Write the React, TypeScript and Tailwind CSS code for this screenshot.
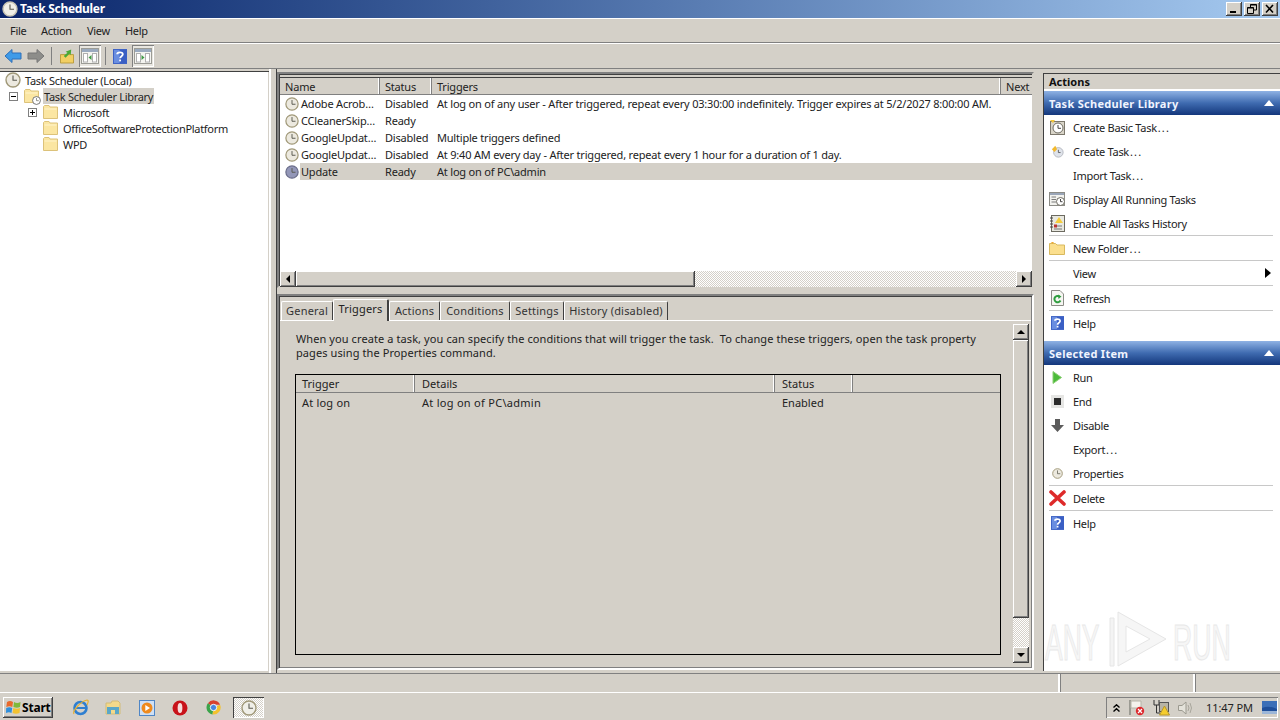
import React from 'react';

const raised = 'shadow-[inset_-1px_-1px_0_#404040,inset_1px_1px_0_#fff,inset_-2px_-2px_0_#808080]';
const headerCell = 'h-full flex items-center border-r border-r-[#808080] shadow-[inset_-1px_0_0_#fff]';
const checker = 'bg-[repeating-conic-gradient(#fff_0_25%,#d4d0c8_0_50%)] bg-[length:2px_2px]';

const Clock = ({ size = 14, fill = '#ece9df', stroke = '#a09878' }: { size?: number; fill?: string; stroke?: string }) => (
  <svg width={size} height={size} viewBox="0 0 16 16">
    <circle cx="8" cy="8" r="7" fill={fill} stroke={stroke} strokeWidth="1.4" />
    <path d="M8 3.5V8.3H12" fill="none" stroke="#5a5a50" strokeWidth="1.1" />
  </svg>
);

const Folder = () => (
  <svg width="15" height="14" viewBox="0 0 15 14">
    <path d="M.5 13.5V1.5L1.5.5H6L7 2H14.5V13.5Z" fill="#fbe6a2" stroke="#dcc27a" />
    <path d="M1.5 4H13.5" stroke="#fff4cc" />
  </svg>
);

const Expander = ({ open }: { open?: boolean }) => (
  <svg width="9" height="9" viewBox="0 0 9 9">
    <rect x=".5" y=".5" width="8" height="8" fill="#fff" stroke="#808080" />
    <path d={open ? 'M2 4.5H7' : 'M2 4.5H7M4.5 2V7'} stroke="#000" />
  </svg>
);

const HelpIcon = ({ size = 15 }: { size?: number }) => (
  <svg width={size} height={size + 1} viewBox="0 0 15 16">
    <rect width="15" height="16" fill="#3a5fc4" />
    <rect x="1" y="1" width="6" height="14" fill="#6a8ee0" />
    <path d="M4.5 5.5C4.5 3 10.5 2.8 10.5 5.6C10.5 7.6 7.6 7.8 7.6 10" fill="none" stroke="#fff" strokeWidth="2" />
    <rect x="6.6" y="11.2" width="2" height="2" fill="#fff" />
  </svg>
);

const BarArrow = ({ dir, color, dark }: { dir: 'l' | 'r'; color: string; dark: string }) => (
  <svg width="18" height="16" viewBox="0 0 18 16">
    <path
      d={dir === 'l' ? 'M1 8L8 1.5V5H17V11H8V14.5Z' : 'M17 8L10 1.5V5H1V11H10V14.5Z'}
      fill={color}
      stroke={dark}
    />
  </svg>
);

const PaneToggle = ({ right }: { right?: boolean }) => (
  <svg width="18" height="16" viewBox="0 0 18 16">
    <rect x=".5" y=".5" width="17" height="15" fill="#f4f4f0" stroke="#9c9c96" />
    <rect x="1" y="1" width="16" height="3" fill="#9aaabf" />
    <rect x="2.5" y="5.5" width="4" height="8.5" fill="#fff" stroke="#b0b0b0" />
    <rect x="11.5" y="5.5" width="4" height="8.5" fill="#fff" stroke="#b0b0b0" />
    <path d={right ? 'M7.5 7V12L10.5 9.5Z' : 'M10.5 7V12L7.5 9.5Z'} fill="#3f9a45" />
  </svg>
);

const treeRow = 'h-4 flex items-center';

function Tree() {
  return (
    <div className="w-[268px] bg-white text-[#222] tracking-[-0.3px]">
      <div className={`${treeRow} pl-[5px] gap-[4px]`}>
        <Clock size={16} />
        <span>Task Scheduler (Local)</span>
      </div>
      <div className={`${treeRow} pl-[9px]`}>
        <Expander open />
        <span className="ml-[6px] relative">
          <Folder />
          <span className="absolute -right-[2px] -bottom-[2px]"><Clock size={9} fill="#fff" stroke="#555" /></span>
        </span>
        <span className="ml-[4px] bg-[#d4d0c8] px-[1px] h-4 flex items-center">Task Scheduler Library</span>
      </div>
      <div className={`${treeRow} pl-[28px]`}>
        <Expander />
        <span className="ml-[6px]"><Folder /></span>
        <span className="ml-[5px]">Microsoft</span>
      </div>
      <div className={`${treeRow} pl-[43px]`}>
        <Folder />
        <span className="ml-[5px]">OfficeSoftwareProtectionPlatform</span>
      </div>
      <div className={`${treeRow} pl-[43px]`}>
        <Folder />
        <span className="ml-[5px]">WPD</span>
      </div>
    </div>
  );
}

const tasks = [
  { name: 'Adobe Acrob…', status: 'Disabled', trigger: 'At log on of any user - After triggered, repeat every 03:30:00 indefinitely. Trigger expires at 5/2/2027 8:00:00 AM.' },
  { name: 'CCleanerSkip…', status: 'Ready', trigger: '' },
  { name: 'GoogleUpdat…', status: 'Disabled', trigger: 'Multiple triggers defined' },
  { name: 'GoogleUpdat…', status: 'Disabled', trigger: 'At 9:40 AM every day - After triggered, repeat every 1 hour for a duration of 1 day.' },
  { name: 'Update', status: 'Ready', trigger: 'At log on of PC\\admin', selected: true },
];

const ScrollBtn = ({ dir }: { dir: 'l' | 'r' | 'u' | 'd' }) => {
  const d = { l: 'M10 4V12L6 8Z', r: 'M6 4V12L10 8Z', u: 'M4 10H12L8 6Z', d: 'M4 6H12L8 10Z' }[dir];
  return (
    <div className={`w-4 h-4 shrink-0 bg-[#d4d0c8] ${raised}`}>
      <svg width="16" height="16" viewBox="0 0 16 16"><path d={d} fill="#000" /></svg>
    </div>
  );
};

function TaskList() {
  return (
    <div className="h-[216px] mt-[3px] border-2 border-[#808080] border-r-[#d4d0c8] border-b-[#d4d0c8] shadow-[inset_1px_1px_0_#404040]">
      <div className="h-full bg-white flex flex-col ml-[1px] mt-[1px] text-[#222] tracking-[-0.2px]">
        <div className="h-[3px] shrink-0 bg-[#d4d0c8] border-b border-[#404040]" />
        <div className="h-[17px] flex shrink-0 bg-[#d4d0c8] border-b border-[#808080]">
          <div className={`${headerCell} w-[100px] pl-[5px]`}>Name</div>
          <div className={`${headerCell} w-[52px] pl-[5px]`}>Status</div>
          <div className={`${headerCell} w-[569px] pl-[5px]`}>Triggers</div>
          <div className="pl-[5px] flex items-center">Next</div>
        </div>
        <div className="flex-1">
          {tasks.map((t, i) => (
            <div key={i} className="h-[17px] flex items-center">
              <div className="w-[20px] pl-[5px] shrink-0 flex">
                <Clock fill={t.selected ? '#9397b8' : '#ece9df'} stroke={t.selected ? '#6a6d8a' : '#a09878'} />
              </div>
              <div className={`flex-1 h-full flex items-center ${t.selected ? 'bg-[#d4d0c8]' : ''}`}>
                <div className="w-[85px] pl-[1px] whitespace-nowrap">{t.name}</div>
                <div className="w-[52px] whitespace-nowrap">{t.status}</div>
                <div className="whitespace-nowrap">{t.trigger}</div>
              </div>
            </div>
          ))}
        </div>
        <div className="h-4 flex shrink-0">
          <ScrollBtn dir="l" />
          <div className={`w-[399px] bg-[#d4d0c8] ${raised}`} />
          <div className={`flex-1 ${checker}`} />
          <ScrollBtn dir="r" />
        </div>
      </div>
    </div>
  );
}

const tabs = [
  { label: 'General', w: 'w-[52px]' },
  { label: 'Triggers', w: 'w-[56px]', active: true },
  { label: 'Actions', w: 'w-[51px]' },
  { label: 'Conditions', w: 'w-[70px]' },
  { label: 'Settings', w: 'w-[54px]' },
  { label: 'History (disabled)', w: 'w-[104px]' },
];

function Details() {
  return (
    <div className="flex-1 border-2 border-[#808080] border-r-[#fff] border-b-[#fff] shadow-[inset_1px_1px_0_#404040,inset_-1px_-1px_0_#808080] flex flex-col text-[#222] pt-[2px] pb-[2px] pr-[1px] pl-[1px]">
      <div className="h-[22px] flex items-end pl-[1px] shrink-0 tracking-[0.2px]">
        {tabs.map(t =>
          t.active ? (
            <div key={t.label} className={`${t.w} h-[22px] flex justify-center pt-[3px] bg-[#d4d0c8] border-t border-l border-white border-r-2 border-r-[#404040] rounded-t-[2px] relative z-10 -mb-[1px]`}>
              {t.label}
            </div>
          ) : (
            <div key={t.label} className={`${t.w} h-[19px] flex items-center justify-center pb-[2px] text-[#333] bg-[#d4d0c8] border-t border-l border-white border-r border-r-[#404040] rounded-t-[2px]`}>
              {t.label}
            </div>
          ),
        )}
      </div>
      <div className="flex-1 border-t border-white flex pl-[15px] pr-[1px]">
        <div className="w-[706px] shrink-0 flex flex-col">
          <div className="mt-[11px] ml-[1px] leading-[14px] w-[700px] tracking-[0.09px]">
            When you create a task, you can specify the conditions that will trigger the task.&nbsp; To change these triggers, open the task property<br />
            pages using the Properties command.
          </div>
          <div className="mt-[14px] h-[281px] border border-black flex flex-col">
            <div className="h-[18px] flex shrink-0 border-b border-[#808080]">
              <div className={`${headerCell} w-[119px] pl-[6px]`}>Trigger</div>
              <div className={`${headerCell} w-[360px] pl-[7px]`}>Details</div>
              <div className={`${headerCell} w-[78px] pl-[7px]`}>Status</div>
            </div>
            <div className="h-[19px] flex items-center">
              <div className="w-[119px] pl-[6px] tracking-[0.2px]">At log on</div>
              <div className="w-[360px] pl-[7px] tracking-[0.28px]">At log on of PC\admin</div>
              <div className="pl-[7px]">Enabled</div>
            </div>
          </div>
        </div>
        <div className="ml-[12px] w-4 mt-[3px] flex flex-col h-[339px]">
          <ScrollBtn dir="u" />
          <div className={`h-[278px] bg-[#d4d0c8] ${raised}`} />
          <div className={`flex-1 ${checker}`} />
          <ScrollBtn dir="d" />
        </div>
      </div>
    </div>
  );
}

const SectionTitle = ({ label }: { label: string }) => (
  <div className="h-[24px] flex items-center justify-between pl-[5px] pr-[6px] bg-gradient-to-b from-[#8fb2e4] via-[#3f6bb0] to-[#14377c] text-white font-bold tracking-[0.28px]">
    <span className="text-[#f0f4ff]">{label}</span>
    <svg width="10" height="6" viewBox="0 0 10 6"><path d="M0 6L5 0L10 6Z" fill="#fff" /></svg>
  </div>
);

const Sep = () => <div className="h-[1px] ml-[5px] mr-[7px] bg-[#c8c8c8]" />;

const ActionRow = ({ icon, label, arrow }: { icon?: React.ReactNode; label: string; arrow?: boolean }) => {
  const dots = label.endsWith('...');
  return (
    <div className="h-[24px] flex items-center text-[#222] tracking-[-0.3px]">
      <div className="w-[29px] shrink-0 flex justify-center pr-[3px]">{icon}</div>
      <span>{dots ? label.slice(0, -3) : label}</span>
      {dots && <span className="ml-[1px] tracking-[1.2px]">...</span>}
      {arrow && (
        <svg className="ml-auto mr-[9px]" width="6" height="10" viewBox="0 0 6 10"><path d="M0 0L6 5L0 10Z" fill="#000" /></svg>
      )}
    </div>
  );
};

const CreateBasicIcon = () => (
  <svg width="17" height="17" viewBox="0 0 17 17">
    <rect x="1.5" y="2.5" width="14" height="13" fill="#d8d4c8" stroke="#7c786c" />
    <circle cx="9" cy="9" r="5" fill="#fff" stroke="#6c6a60" />
    <path d="M9 6V9.3H12" fill="none" stroke="#444" />
    <path d="M1 1L6 1L4 4Z" fill="#f5c83a" />
  </svg>
);
const CreateIcon = () => (
  <svg width="13" height="13" viewBox="0 0 15 15">
    <circle cx="8.5" cy="8.5" r="5.5" fill="#dfe3ea" stroke="#b0b4bc" />
    <path d="M8.5 5.5V8.7H11" fill="none" stroke="#555" />
    <path d="M1 5L5 1L7 5L4 8Z" fill="#f2b92e" />
  </svg>
);
const RunningIcon = () => (
  <svg width="17" height="15" viewBox="0 0 17 15">
    <rect x=".5" y=".5" width="15" height="13" fill="#f2f2ee" stroke="#8c8c86" />
    <rect x="1" y="1" width="14" height="2" fill="#9aa6b8" />
    <path d="M2.5 5H7M2.5 7.5H7M2.5 10H7" stroke="#7a7a7a" />
    <circle cx="11.5" cy="9.5" r="4" fill="#fff" stroke="#6c6a60" />
    <path d="M11.5 7V9.7H13.5" fill="none" stroke="#444" />
  </svg>
);
const HistoryIcon = () => (
  <svg width="15" height="17" viewBox="0 0 15 17">
    <rect x="1.5" y=".5" width="13" height="16" fill="#e8e8e0" stroke="#6c6a60" />
    <path d="M0 3H3M0 6H3M0 9H3M0 12H3" stroke="#444" />
    <path d="M4 11H12M4 14H12" stroke="#777" />
    <path d="M9 2L13 8H5Z" fill="#f5cd3c" />
    <rect x="4" y="9.5" width="3" height="3" fill="#b33" />
  </svg>
);
const NewFolderIcon = () => (
  <svg width="16" height="14" viewBox="0 0 16 14">
    <path d="M.5 13.5V2.5H6.5L8 4H15.5V13.5Z" fill="#fbdf8e" stroke="#d8b95e" />
    <path d="M2 1L5 1L3.5 3Z" fill="#f0a830" />
  </svg>
);
const RefreshIcon = () => (
  <svg width="13" height="16" viewBox="0 0 13 16">
    <path d="M.5.5H9L12.5 4V15.5H.5Z" fill="#f6f6f2" stroke="#8c8c86" />
    <path d="M9.5 10.5A3.2 3.2 0 1 1 8.5 6.5" fill="none" stroke="#2f9e3f" strokeWidth="2" />
    <path d="M7 4.5L10.5 6.5L7.5 9Z" fill="#2f9e3f" />
  </svg>
);
const RunIcon = () => (
  <svg width="10" height="13" viewBox="0 0 10 13"><path d="M1 .5L9.5 6.5L1 12.5Z" fill="#4cbb3a" stroke="#8ccf76" /></svg>
);
const EndIcon = () => (
  <svg width="13" height="13" viewBox="0 0 13 13">
    <rect width="13" height="13" fill="#e6e6e4" />
    <rect x="3" y="3" width="7" height="7" fill="#2c2c2c" />
  </svg>
);
const DisableIcon = () => (
  <svg width="13" height="13" viewBox="0 0 13 13"><path d="M4 0H9V6H13L6.5 13L0 6H4Z" fill="#5c5c5c" /></svg>
);
const DeleteIcon = () => (
  <svg width="17" height="16" viewBox="0 0 17 16">
    <path d="M2 2L15 14M15 2L2 14" stroke="#de2a2a" strokeWidth="3.6" strokeLinecap="round" />
  </svg>
);

function Actions() {
  return (
    <div className="flex-1 flex flex-col border-l border-[#404040] border-t">
      <div className="h-[16px] flex items-center pl-[5px] font-bold text-[#111] border-b border-white shrink-0">Actions</div>
      <div className="flex-1 bg-white pt-[1px]">
        <SectionTitle label="Task Scheduler Library" />
        <ActionRow icon={<CreateBasicIcon />} label="Create Basic Task..." />
        <ActionRow icon={<CreateIcon />} label="Create Task..." />
        <ActionRow label="Import Task..." />
        <ActionRow icon={<RunningIcon />} label="Display All Running Tasks" />
        <ActionRow icon={<HistoryIcon />} label="Enable All Tasks History" />
        <Sep />
        <ActionRow icon={<NewFolderIcon />} label="New Folder..." />
        <Sep />
        <ActionRow label="View" arrow />
        <Sep />
        <ActionRow icon={<RefreshIcon />} label="Refresh" />
        <Sep />
        <ActionRow icon={<HelpIcon size={13} />} label="Help" />
        <div className="h-[6px]" />
        <SectionTitle label="Selected Item" />
        <ActionRow icon={<RunIcon />} label="Run" />
        <ActionRow icon={<EndIcon />} label="End" />
        <ActionRow icon={<DisableIcon />} label="Disable" />
        <ActionRow label="Export..." />
        <ActionRow icon={<Clock size={11} />} label="Properties" />
        <Sep />
        <ActionRow icon={<DeleteIcon />} label="Delete" />
        <Sep />
        <ActionRow icon={<HelpIcon size={13} />} label="Help" />
      </div>
    </div>
  );
}

function Taskbar() {
  return (
    <div className="h-[28px] border-t border-white flex items-center relative shrink-0 pt-[2px]">
      <div className={`ml-[3px] w-[50px] h-[21px] flex items-center pl-[3px] gap-[1px] font-bold text-[12px] tracking-[-0.2px] text-black ${raised}`}>
        <svg width="15" height="15" viewBox="0 0 15 15">
          <path d="M1 2Q4 0 7 2L6.3 7Q3.5 5.5 .3 7Z" fill="#e9692c" />
          <path d="M8 2Q11 4 14.5 2L14 7Q11 8.5 7.4 7Z" fill="#7fb93a" />
          <path d="M.2 8Q3.5 6.5 6.2 8L5.5 13Q3 11.5 0 13Z" fill="#2f8fdc" />
          <path d="M7.3 8Q11 9.5 14 8L13.5 13Q10 14.5 6.6 13Z" fill="#f2c230" />
        </svg>
        Start
      </div>
      <div className="ml-[19px] flex items-center">
        <svg width="17" height="17" viewBox="0 0 17 17">
          <circle cx="8.5" cy="9" r="6" fill="none" stroke="#2f7fd0" strokeWidth="2.6" />
          <path d="M4 9H14" stroke="#2f7fd0" strokeWidth="2" />
          <path d="M2 15C0 12 9 2 15 1C17 1 16 4 15 6" fill="none" stroke="#e6b030" strokeWidth="1.2" />
        </svg>
        <svg className="ml-[16px]" width="16" height="15" viewBox="0 0 16 15">
          <path d="M1 3H6L7 1H13L15 3V14H1Z" fill="#f3d98a" stroke="#d2bb78" />
          <path d="M2 7H14V14H10V10H6V14H2Z" fill="#5aa7c8" />
        </svg>
        <svg className="ml-[18px]" width="16" height="16" viewBox="0 0 16 16">
          <rect x=".5" y=".5" width="15" height="15" fill="#cfe0f5" stroke="#4f86c6" />
          <circle cx="8" cy="8" r="5.5" fill="#ef8a1d" />
          <path d="M6.3 5L11 8L6.3 11Z" fill="#fff" />
        </svg>
        <svg className="ml-[17px]" width="16" height="16" viewBox="0 0 16 16">
          <circle cx="8" cy="8" r="7.5" fill="#c8121a" />
          <ellipse cx="8" cy="8" rx="2.4" ry="5" fill="#f6dcdc" />
        </svg>
        <svg className="ml-[18px]" width="15" height="15" viewBox="0 0 16 16">
          <path d="M8 8L2 3.5A7.5 7.5 0 0 1 15 5H8Z" fill="#d8412f" />
          <path d="M8 8L2 3.5A7.5 7.5 0 0 0 7 15.4Z" fill="#3ba44a" />
          <path d="M8 8L15 5A7.5 7.5 0 0 1 7 15.4Z" fill="#f3c22e" />
          <circle cx="8" cy="8" r="3.4" fill="#4a86e0" stroke="#fff" />
        </svg>
      </div>
      <div className={`ml-[12px] w-[31px] h-[21px] flex items-center justify-center ${checker} shadow-[inset_1px_1px_0_#404040,inset_-1px_-1px_0_#fff]`}>
        <Clock size={16} fill="#f0efe8" />
      </div>
      <div className="ml-auto mr-[2px] w-[172px] h-[21px] flex items-center shadow-[inset_1px_1px_0_#808080,inset_-1px_-1px_0_#fff] text-[#222]">
        <svg className="ml-[7px]" width="7" height="8" viewBox="0 0 7 8">
          <path d="M.5 3.5L3.5 .8L6.5 3.5M.5 7.5L3.5 4.8L6.5 7.5" fill="none" stroke="#000" strokeWidth="1.4" />
        </svg>
        <svg className="ml-[8px]" width="17" height="17" viewBox="0 0 17 17">
          <path d="M2 1V16" stroke="#8a8a82" strokeWidth="1.5" />
          <path d="M3 2H13V9H3Z" fill="#f4f2ec" stroke="#b6b4a8" />
          <circle cx="12" cy="12" r="4.2" fill="#dd2a2f" />
          <path d="M10 10L14 14M14 10L10 14" stroke="#fff" strokeWidth="1.2" />
        </svg>
        <svg className="ml-[8px]" width="17" height="17" viewBox="0 0 17 17">
          <path d="M1 1V6H6V1M3.5 6V14H7" fill="none" stroke="#333" />
          <rect x="6.5" y="3.5" width="9" height="9" fill="#b8b4a6" stroke="#555" />
          <path d="M11.5 7L16.5 16H6.5Z" fill="#f5cd2e" stroke="#b8962a" />
        </svg>
        <svg className="ml-[7px]" width="17" height="16" viewBox="0 0 17 16">
          <path d="M1.5 5.5H5L9 2V14L5 10.5H1.5Z" fill="#e4e2da" stroke="#9c9a90" />
          <path d="M11 5Q13 8 11 11M13 3Q16 8 13 13" fill="none" stroke="#a8a69c" />
        </svg>
        <span className="ml-[12px] whitespace-nowrap tracking-[-0.1px]">11:47 PM</span>
        <svg className="ml-[9px]" width="15" height="13" viewBox="0 0 15 13">
          <rect width="15" height="13" fill="#3b6fb8" />
          <rect y="10" width="15" height="3" fill="#9cb6d8" />
          <path d="M0 7Q7 4 15 8V10H0Z" fill="#1f4f9a" />
        </svg>
      </div>
    </div>
  );
}

function App() {
  return (
    <div className="w-[1280px] h-[720px] overflow-hidden relative bg-[#d4d0c8] flex flex-col text-[11px] leading-none [font-family:'Noto_Sans',sans-serif]">
      <div className="h-[18px] shrink-0 flex items-center bg-gradient-to-r from-[#0a246a] to-[#a6caf0] pl-[2px] pr-[2px] text-white font-bold text-[12px] tracking-[-0.3px]">
        <Clock size={16} fill="#f0efe8" stroke="#c8c4b4" />
        <span className="ml-[2px]">Task Scheduler</span>
        <div className="ml-auto flex gap-[2px] text-black">
          <div className={`w-[16px] h-[14px] bg-[#d4d0c8] ${raised} flex items-end pb-[3px] pl-[4px]`}><div className="w-[6px] h-[2px] bg-black" /></div>
          <div className={`w-[16px] h-[14px] bg-[#d4d0c8] ${raised}`}>
            <svg width="16" height="14" viewBox="0 0 16 14"><path d="M6.5 5V2.5H12.5V8H10M3.5 5.5H9.5V11.5H3.5ZM3.5 6H9.5M6.5 3H12.5" fill="none" stroke="#000" /></svg>
          </div>
          <div className={`w-[16px] h-[14px] bg-[#d4d0c8] ${raised}`}>
            <svg width="16" height="14" viewBox="0 0 16 14"><path d="M4 3L11 10.5M11 3L4 10.5" stroke="#000" strokeWidth="1.6" /></svg>
          </div>
        </div>
      </div>
      <div className="h-[25px] shrink-0 border-t border-white border-b border-b-[#808080] flex items-center pl-[10px] text-[#222] tracking-[-0.3px]">
        <span className="w-[31px]">File</span>
        <span className="w-[46px]">Action</span>
        <span className="w-[38px]">View</span>
        <span>Help</span>
      </div>
      <div className="h-[25px] shrink-0 border-t border-white flex items-center pl-[4px]">
        <BarArrow dir="l" color="#3f9be8" dark="#2f6fb8" />
        <span className="ml-[5px]"><BarArrow dir="r" color="#8d8d8a" dark="#777" /></span>
        <div className="ml-[6px] w-[1px] h-[18px] bg-[#808080]" />
        <svg className="ml-[8px]" width="14" height="16" viewBox="0 0 15 16">
          <path d="M.5 15.5V6.5H14.5V15.5Z" fill="#f2cf63" stroke="#b89a3a" />
          <path d="M4 8L8 4.5L6 3.5L12 1L11.5 7L10 5.5L6 10Z" fill="#4aa836" />
        </svg>
        <div className="ml-[5px] w-[22px] h-[22px] flex items-center justify-center bg-[#e8e6e0] shadow-[inset_1px_1px_0_#808080,inset_-1px_-1px_0_#fff]"><PaneToggle /></div>
        <div className="ml-[4px] w-[1px] h-[18px] bg-[#808080]" />
        <div className="ml-[7px]"><HelpIcon size={14} /></div>
        <div className="ml-[5px] w-[22px] h-[22px] flex items-center justify-center bg-[#e8e6e0] shadow-[inset_1px_1px_0_#808080,inset_-1px_-1px_0_#fff]"><PaneToggle right /></div>
      </div>
      <div className="flex-1 flex min-h-0 border-t border-[#808080]">
        <div className="w-[271px] shrink-0 pt-[2px] pb-[2px] border-r-2 border-r-white">
          <div className="h-full border-t border-[#404040] flex"><Tree /></div>
        </div>
        <div className="w-[6px] shrink-0 bg-[#d4d0c8] border-r border-[#404040]" />
        <div className="w-[757px] shrink-0 flex flex-col pb-[3px]">
          <TaskList />
          <div className="h-[6px] shrink-0" />
          <Details />
        </div>
        <div className="w-[9px] shrink-0" />
        <div className="flex-1 flex pt-[4px] pb-[2px] min-w-0"><Actions /></div>
      </div>
      <div className="h-[19px] shrink-0 border-t border-[#808080] flex">
        <div className="w-[1060px] border-r-2 border-r-white" />
        <div className="w-[135px] border-l border-l-[#808080] border-r-2 border-r-white" />
        <div className="flex-1 border-l border-l-[#808080]" />
      </div>
      <Taskbar />
      {/* watermark */}
      <svg className="absolute left-[1024px] top-[606px] pointer-events-none" width="250" height="66" viewBox="0 0 250 66">
        <text transform="translate(21 54) scale(1.06 2)" fontSize="25" fill="#f6f6f6" stroke="#e8e8e8" strokeWidth="0.5" fontFamily="Liberation Sans">ANY</text>
        <path d="M86 12H90V60H86Z" fill="#f4f4f4" stroke="#e6e6e6" />
        <path d="M94 6V60L142 33Z M102 20V46L126 33Z" fill="#f6f6f6" fillRule="evenodd" stroke="#e6e6e6" />
        <text transform="translate(149 54) scale(1.07 2)" fontSize="25" fill="#f6f6f6" stroke="#e8e8e8" strokeWidth="0.5" fontFamily="Liberation Sans">RUN</text>
      </svg>
    </div>
  );
}

export default App;
